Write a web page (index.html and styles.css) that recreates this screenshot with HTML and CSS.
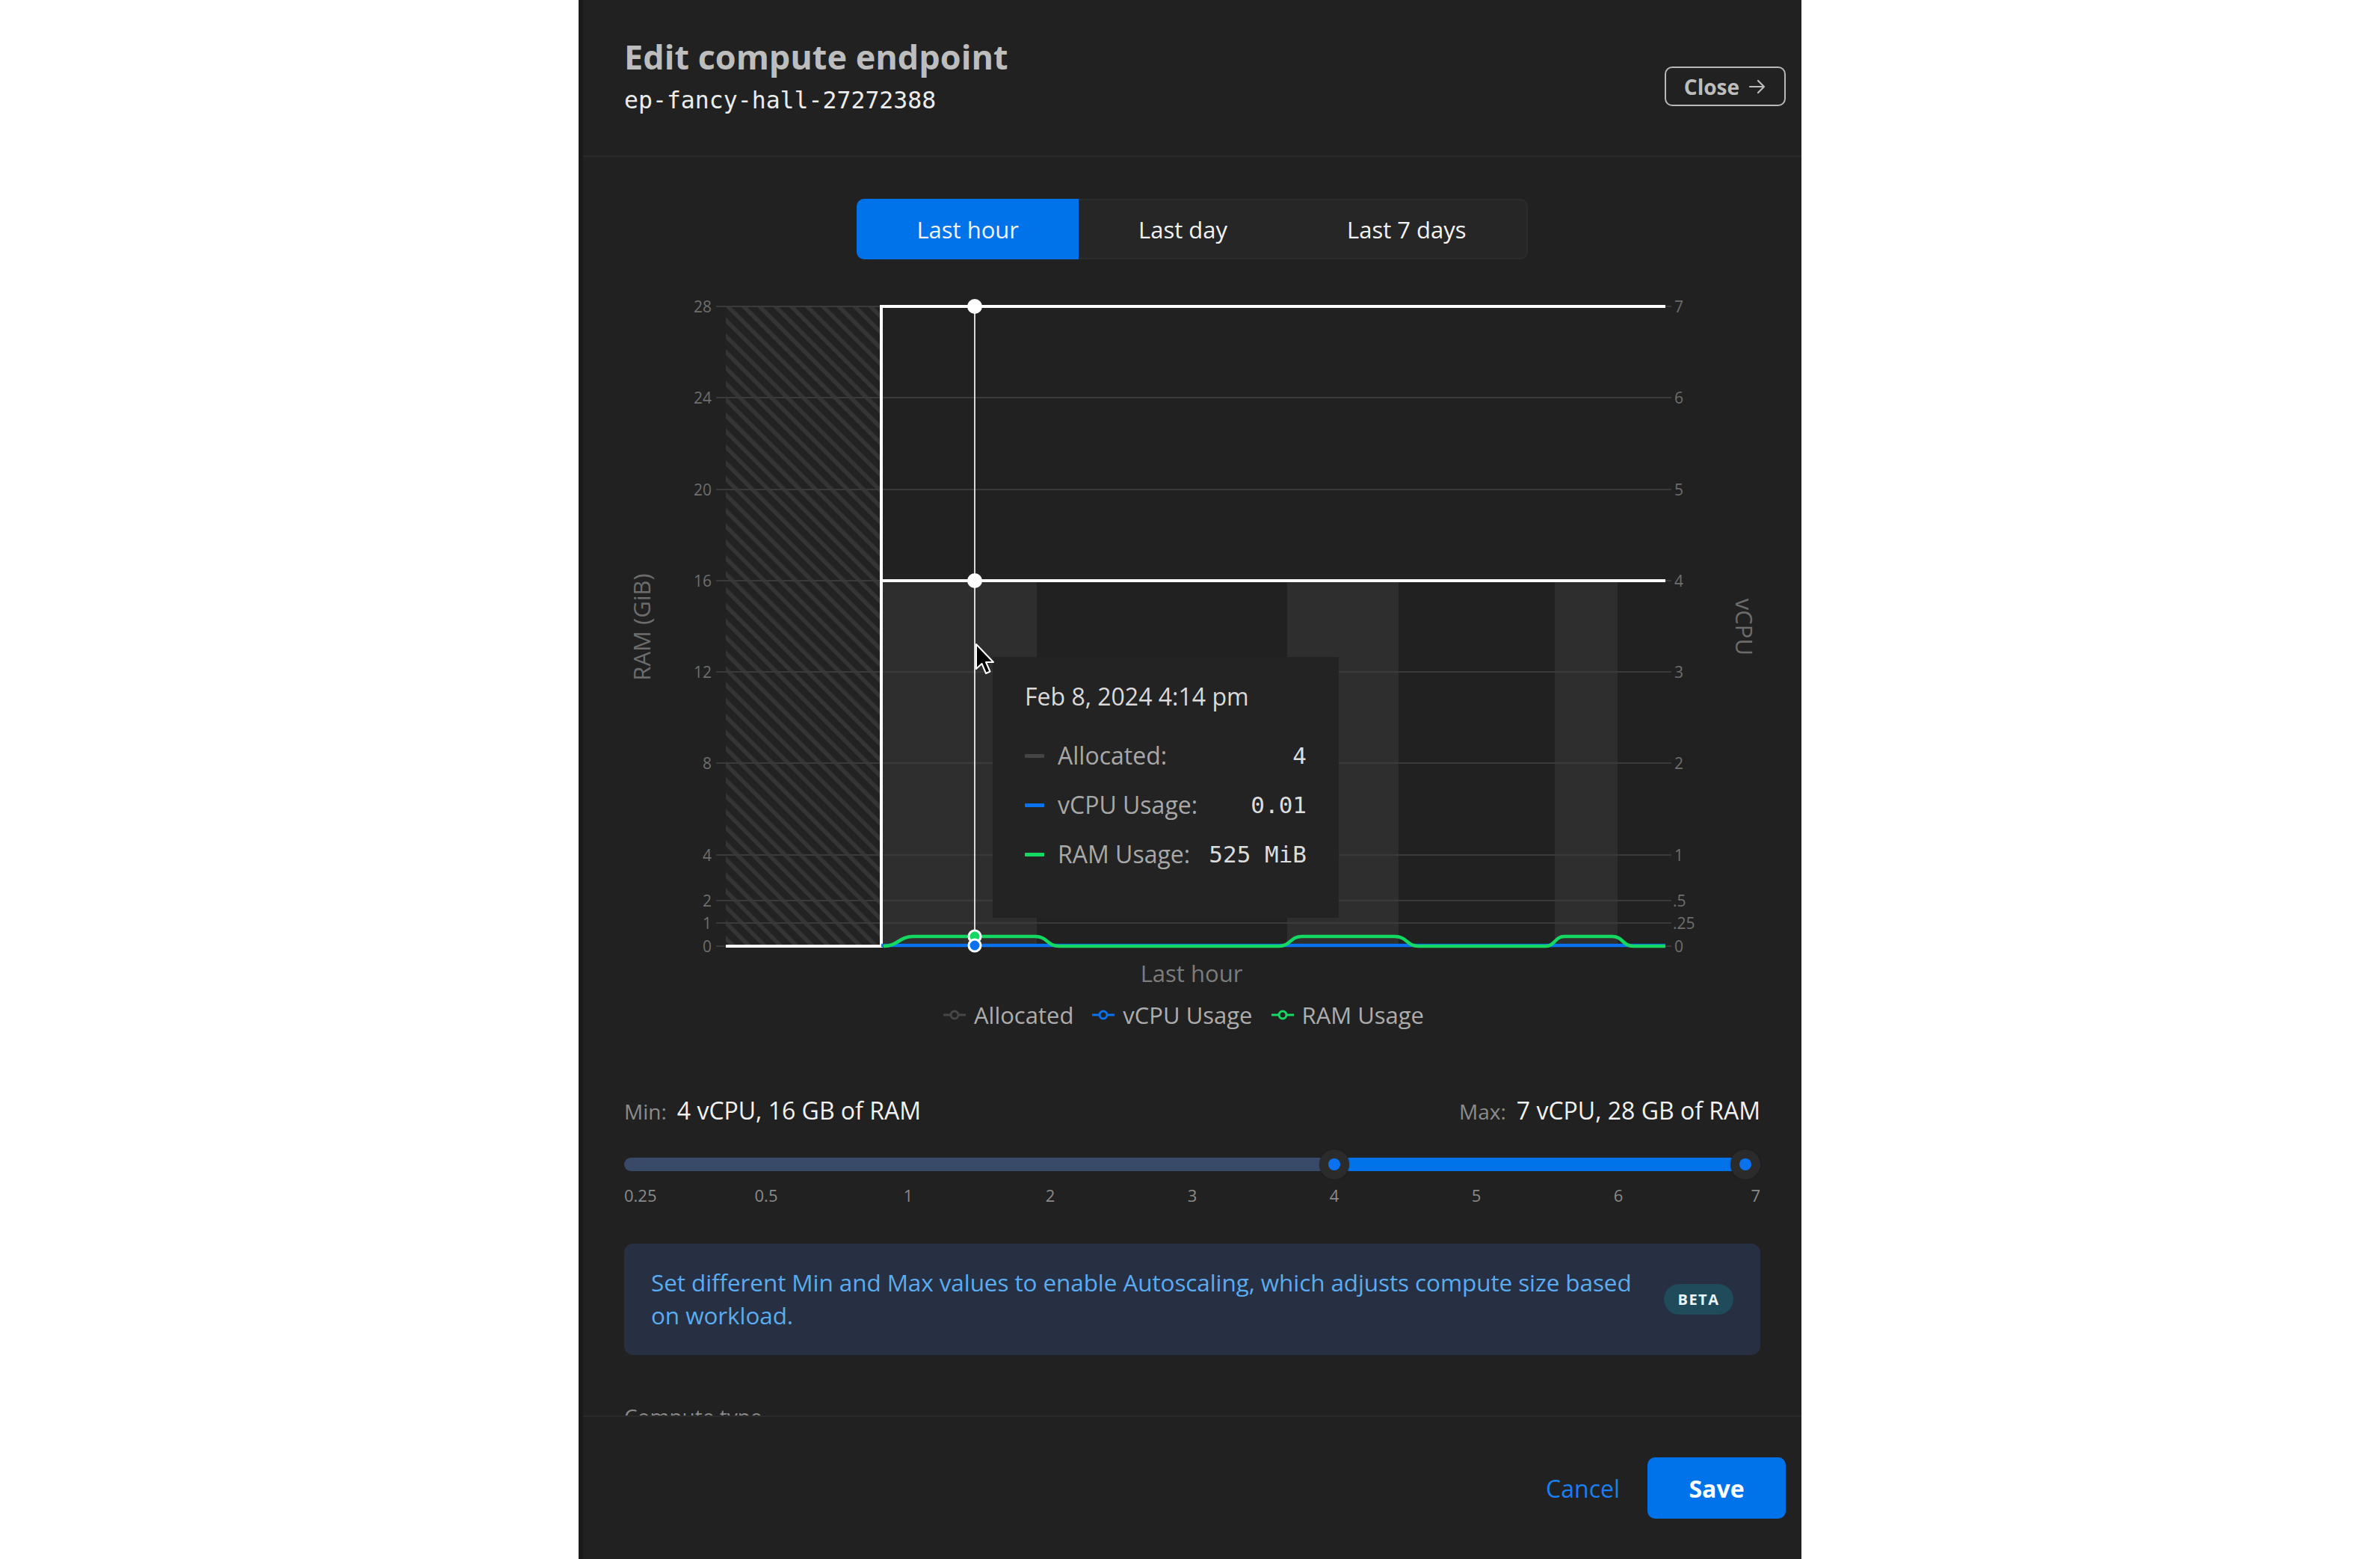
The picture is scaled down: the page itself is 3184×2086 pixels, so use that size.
FILE: index.html
```html
<!DOCTYPE html>
<html lang="en">
<head>
<meta charset="utf-8">
<title>Edit compute endpoint</title>
<link rel="stylesheet" href="styles.css">
</head>
<body>
<div class="page">
  <aside class="panel">
    <header class="panel-header">
      <div class="heading">
        <h1 class="title">Edit compute endpoint</h1>
        <div class="endpoint-id">ep-fancy-hall-27272388</div>
      </div>
      <button class="close-btn" type="button">Close
        <svg class="close-arrow" viewBox="0 0 28 28" width="28" height="28"><path d="M4 14 H23 M15 6 L23 14 L15 22" fill="none" stroke="#bdbdbd" stroke-width="2.2" stroke-linecap="round" stroke-linejoin="round"/></svg>
      </button>
    </header>

    <div class="panel-body">
      <div class="range-tabs">
        <button class="range-tab is-active" type="button">Last hour</button>
        <button class="range-tab" type="button">Last day</button>
        <button class="range-tab" type="button">Last 7 days</button>
      </div>

      <div class="chart">
        <svg class="chart-svg" width="1540" height="980" viewBox="0 0 1540 980">
          <defs>
            <pattern id="hatch" width="15" height="15" patternUnits="userSpaceOnUse" patternTransform="rotate(-45)">
              <rect width="15" height="15" fill="#222222"/>
              <rect width="5.5" height="15" fill="#353535"/>
            </pattern>
          </defs>
          <rect x="136" y="50" width="208" height="856" fill="url(#hatch)"/>
          <g fill="#2e2e2e">
            <rect x="344" y="417" width="208" height="489"/>
            <rect x="887" y="417" width="149" height="489"/>
            <rect x="1245" y="417" width="84" height="489"/>
          </g>
          <g stroke="#3a3a3a" stroke-width="2">
            <line x1="123" y1="50" x2="1401" y2="50"/>
            <line x1="123" y1="172" x2="1401" y2="172"/>
            <line x1="123" y1="295" x2="1401" y2="295"/>
            <line x1="123" y1="417" x2="1401" y2="417"/>
            <line x1="123" y1="539" x2="1401" y2="539"/>
            <line x1="123" y1="661" x2="1401" y2="661"/>
            <line x1="123" y1="784" x2="1401" y2="784"/>
            <line x1="123" y1="845" x2="1401" y2="845"/>
            <line x1="123" y1="875" x2="1401" y2="875"/>
            <line x1="123" y1="906" x2="1401" y2="906"/>
          </g>
          <g class="tick-left" text-anchor="end" dominant-baseline="central">
            <text x="117" y="50">28</text>
            <text x="117" y="172">24</text>
            <text x="117" y="295">20</text>
            <text x="117" y="417">16</text>
            <text x="117" y="539">12</text>
            <text x="117" y="661">8</text>
            <text x="117" y="784">4</text>
            <text x="117" y="845">2</text>
            <text x="117" y="875">1</text>
            <text x="117" y="906">0</text>
          </g>
          <g class="tick-right" text-anchor="start" dominant-baseline="central">
            <text x="1405" y="50">7</text>
            <text x="1405" y="172">6</text>
            <text x="1405" y="295">5</text>
            <text x="1405" y="417">4</text>
            <text x="1405" y="539">3</text>
            <text x="1405" y="661">2</text>
            <text x="1405" y="784">1</text>
            <text x="1403" y="845">.5</text>
            <text x="1403" y="875">.25</text>
            <text x="1405" y="906">0</text>
          </g>
          <text class="axis-title" x="23" y="479" text-anchor="middle" dominant-baseline="central" transform="rotate(-90 23 479)">RAM (GiB)</text>
          <text class="axis-title" x="1499" y="479" text-anchor="middle" dominant-baseline="central" transform="rotate(90 1499 479)">vCPU</text>
          <text class="axis-title x-title" x="759" y="942" text-anchor="middle" dominant-baseline="central">Last hour</text>

          <path d="M136,906 H344 V50 H1393" fill="none" stroke="#ffffff" stroke-width="4"/>
          <path d="M344,417 H1393" fill="none" stroke="#ffffff" stroke-width="4"/>
          <path d="M344,905 H1393" fill="none" stroke="#0a72ef" stroke-width="4.5"/>
          <path d="M347,906 C367,906 367,893 387,893 H550 C566,893 566,906 582,906 H876 C891,906 891,893 907,893 H1031 C1047,893 1047,906 1063,906 H1233 C1245,906 1245,893 1258,893 H1322 C1336,893 1336,906 1350,906 H1393" fill="none" stroke="#14d862" stroke-width="4.5"/>

          <line x1="469" y1="50" x2="469" y2="906" stroke="#d6d6d6" stroke-width="2"/>
          <circle cx="469" cy="50" r="10" fill="#ffffff"/>
          <circle cx="469" cy="417" r="10" fill="#ffffff"/>
          <circle cx="469" cy="893" r="8" fill="#14d862" stroke="#ffffff" stroke-width="3"/>
          <circle cx="469" cy="905" r="8" fill="#0a72ef" stroke="#ffffff" stroke-width="3"/>
        </svg>

        <div class="chart-tooltip">
          <div class="tt-date">Feb 8, 2024 4:14 pm</div>
          <div class="tt-row"><span class="tt-swatch swatch-alloc"></span><span class="tt-label">Allocated:</span><span class="tt-value">4</span></div>
          <div class="tt-row"><span class="tt-swatch swatch-cpu"></span><span class="tt-label">vCPU Usage:</span><span class="tt-value">0.01</span></div>
          <div class="tt-row"><span class="tt-swatch swatch-ram"></span><span class="tt-label">RAM Usage:</span><span class="tt-value">525 MiB</span></div>
        </div>

        <svg class="mouse-cursor" width="28" height="44" viewBox="0 0 28 44"><path d="M2,2 L2,35 L9.5,28 L15,41 L20.5,38.5 L15,26 L25,26 Z" fill="#000000" stroke="#ffffff" stroke-width="2" stroke-linejoin="round"/></svg>
      </div>

      <div class="legend">
        <span class="legend-item"><svg width="32" height="16" viewBox="0 0 32 16"><line x1="1" y1="8" x2="31" y2="8" stroke="#474747" stroke-width="3"/><circle cx="16" cy="8" r="5" fill="#212121" stroke="#474747" stroke-width="3"/></svg>Allocated</span>
        <span class="legend-item"><svg width="32" height="16" viewBox="0 0 32 16"><line x1="1" y1="8" x2="31" y2="8" stroke="#0a72ef" stroke-width="3"/><circle cx="16" cy="8" r="5" fill="#212121" stroke="#0a72ef" stroke-width="3"/></svg>vCPU Usage</span>
        <span class="legend-item"><svg width="32" height="16" viewBox="0 0 32 16"><line x1="1" y1="8" x2="31" y2="8" stroke="#14d862" stroke-width="3"/><circle cx="16" cy="8" r="5" fill="#212121" stroke="#14d862" stroke-width="3"/></svg>RAM Usage</span>
      </div>

      <div class="minmax">
        <div class="minmax-item"><span class="minmax-key">Min:</span><span class="minmax-val">4 vCPU, 16 GB of RAM</span></div>
        <div class="minmax-item"><span class="minmax-key">Max:</span><span class="minmax-val">7 vCPU, 28 GB of RAM</span></div>
      </div>

      <div class="range-slider">
        <div class="slider-track"><div class="slider-fill" style="left:950px;right:0"></div></div>
        <span class="slider-thumb" style="left:950px"></span>
        <span class="slider-thumb" style="left:1500px"></span>
      </div>

      <div class="slider-ticks">
        <span class="tick tick-first" style="left:0%">0.25</span>
        <span class="tick" style="left:12.5%">0.5</span>
        <span class="tick" style="left:25%">1</span>
        <span class="tick" style="left:37.5%">2</span>
        <span class="tick" style="left:50%">3</span>
        <span class="tick" style="left:62.5%">4</span>
        <span class="tick" style="left:75%">5</span>
        <span class="tick" style="left:87.5%">6</span>
        <span class="tick tick-last" style="left:100%">7</span>
      </div>

      <div class="autoscale-note">
        <p class="note-text">Set different Min and Max values to enable Autoscaling, which adjusts compute size based on workload.</p>
        <span class="badge">BETA</span>
      </div>

      <div class="field-label">Compute type</div>
    </div>

    <footer class="panel-footer">
      <button class="btn-cancel" type="button">Cancel</button>
      <button class="btn-save" type="button">Save</button>
    </footer>
  </aside>
</div>
</body>
</html>
```
FILE: styles.css
```css
* { box-sizing: border-box; margin: 0; padding: 0; }
html, body { height: 100%; }
body {
  background: #ffffff;
  font-family: "Open Sans", "Noto Sans", sans-serif;
  overflow: hidden;
}
button { font-family: inherit; cursor: pointer; }

.page {
  display: flex;
  justify-content: center;
  height: 2086px;
}
.panel {
  width: 1636px;
  height: 100%;
  background: #212121;
  border-left: 6px solid #1a1a1a;
  display: flex;
  flex-direction: column;
}

/* header */
.panel-header {
  flex: none;
  height: 210px;
  display: flex;
  justify-content: space-between;
  align-items: flex-start;
  padding: 50px 21px 0 55px;
  border-bottom: 2px solid #2a2a2a;
}
.title {
  font-size: 45px;
  font-weight: 700;
  line-height: 52px;
  color: #bdbdbd;
}
.endpoint-id {
  margin-top: 12px;
  font-family: "DejaVu Sans Mono", "Liberation Mono", monospace;
  font-size: 31.5px;
  line-height: 40px;
  color: #ececec;
}
.close-btn {
  margin-top: 39px;
  height: 53px;
  display: flex;
  align-items: center;
  gap: 10px;
  padding: 0 22px 0 24px;
  background: transparent;
  border: 2px solid #b8b8b8;
  border-radius: 10px;
  color: #bdbdbd;
  font-size: 28px;
  font-weight: 700;
}

/* body */
.panel-body {
  flex: 1;
  min-height: 0;
  overflow: hidden;
  display: flex;
  flex-direction: column;
  padding: 56px 55px 0 55px;
}
.panel-body > * { flex-shrink: 0; }

.range-tabs {
  align-self: center;
  display: flex;
  height: 81px;
  background: #262626;
  border: 2px solid #2c2c2c;
  border-radius: 10px;
}
.range-tab {
  background: transparent;
  border: 0;
  padding: 0 80px;
  color: #f2f2f2;
  font-size: 31px;
  font-weight: 400;
  white-space: nowrap;
}
.range-tab.is-active {
  margin: -2px 0 -2px -2px;
  background: #0073ea;
  border-radius: 10px 0 0 10px;
}

.chart {
  position: relative;
  margin-top: 13px;
  margin-right: -20px;
  height: 980px;
}
.chart-svg { display: block; overflow: visible; }
.tick-left text, .tick-right text {
  font-family: "Open Sans", sans-serif;
  font-size: 21px;
  fill: #6e6e6e;
}
.axis-title {
  font-family: "Open Sans", sans-serif;
  font-size: 31px;
  fill: #6c6c6c;
}
.x-title { fill: #7c7c7c; }

.chart-tooltip {
  position: absolute;
  left: 493px;
  top: 519px;
  width: 463px;
  height: 349px;
  background: #232323;
  padding: 31px 43px 0 43px;
}
.tt-date {
  font-size: 32px;
  line-height: 44px;
  font-weight: 500;
  color: #dadada;
  white-space: nowrap;
  margin-bottom: 35px;
}
.tt-row {
  display: flex;
  align-items: center;
  gap: 18px;
  height: 44px;
  margin-bottom: 22px;
  white-space: nowrap;
}
.tt-swatch { flex: none; width: 26px; height: 5px; border-radius: 1px; }
.swatch-alloc { background: #444444; }
.swatch-cpu { background: #0a72ef; }
.swatch-ram { background: #14d862; }
.tt-label {
  font-size: 32px;
  line-height: 44px;
  color: #a8a8a8;
}
.tt-value {
  margin-left: auto;
  font-family: "DejaVu Sans Mono", "Liberation Mono", monospace;
  font-size: 31px;
  line-height: 44px;
  color: #dcdcdc;
}
.mouse-cursor {
  position: absolute;
  left: 469px;
  top: 500px;
}

.legend {
  margin-top: -2px;
  height: 40px;
  display: flex;
  justify-content: center;
  align-items: center;
  gap: 24px;
  padding-right: 24px;
}
.legend-item {
  display: flex;
  align-items: center;
  gap: 10px;
  font-size: 31px;
  line-height: 40px;
  color: #adadad;
  white-space: nowrap;
}

.minmax {
  margin-top: 86px;
  display: flex;
  justify-content: space-between;
  align-items: baseline;
  line-height: 44px;
}
.minmax-item { display: flex; align-items: baseline; gap: 14px; }
.minmax-key { font-size: 28px; color: #8c8c8c; }
.minmax-val { font-size: 32px; color: #f2f2f2; }

.range-slider {
  position: relative;
  margin-top: 29px;
  height: 40px;
}
.slider-track {
  position: absolute;
  left: 0;
  right: 0;
  top: 11px;
  height: 18px;
  border-radius: 9px;
  background: #394a68;
  overflow: hidden;
}
.slider-fill {
  position: absolute;
  top: 0;
  bottom: 0;
  background: #0073ea;
}
.slider-thumb {
  position: absolute;
  top: 0;
  width: 40px;
  height: 40px;
  margin-left: -20px;
  border-radius: 50%;
  background: #2b2b2b;
  display: flex;
  align-items: center;
  justify-content: center;
  box-shadow: 0 0 2px rgba(0,0,0,0.4);
}
.slider-thumb::after {
  content: "";
  width: 16px;
  height: 16px;
  border-radius: 50%;
  background: #0a72ef;
}

.slider-ticks {
  position: relative;
  margin-top: 8px;
  height: 26px;
}
.tick {
  position: absolute;
  top: 0;
  transform: translateX(-50%);
  font-size: 22px;
  line-height: 26px;
  color: #8a8a8a;
}
.tick-first { transform: none; }
.tick-last { transform: translateX(-100%); }

.autoscale-note {
  margin-top: 52px;
  display: flex;
  align-items: center;
  gap: 10px;
  padding: 30px 36px 31px 36px;
  background: #272f42;
  border-radius: 12px;
}
.note-text {
  flex: 1;
  font-size: 31.5px;
  line-height: 44px;
  letter-spacing: -0.1px;
  color: #5aacf0;
}
.badge {
  flex: none;
  width: 93px;
  height: 41px;
  border-radius: 21px;
  background: #1f4b5b;
  color: #e8f4f8;
  font-size: 20px;
  font-weight: 700;
  letter-spacing: 1.5px;
  display: flex;
  align-items: center;
  justify-content: center;
}

.field-label {
  margin-top: 62px;
  font-size: 28px;
  line-height: 40px;
  color: #8a8a8a;
}

/* footer */
.panel-footer {
  flex: none;
  height: 192px;
  border-top: 2px solid #2a2a2a;
  display: flex;
  justify-content: flex-end;
  align-items: center;
  gap: 37px;
  padding: 0 21px 0 55px;
}
.btn-cancel {
  background: transparent;
  border: 0;
  color: #1a7ff0;
  font-size: 32px;
  font-weight: 500;
}
.btn-save {
  width: 185px;
  height: 82px;
  border: 0;
  border-radius: 10px;
  background: #0073ea;
  color: #ffffff;
  font-size: 32px;
  font-weight: 700;
}
```
